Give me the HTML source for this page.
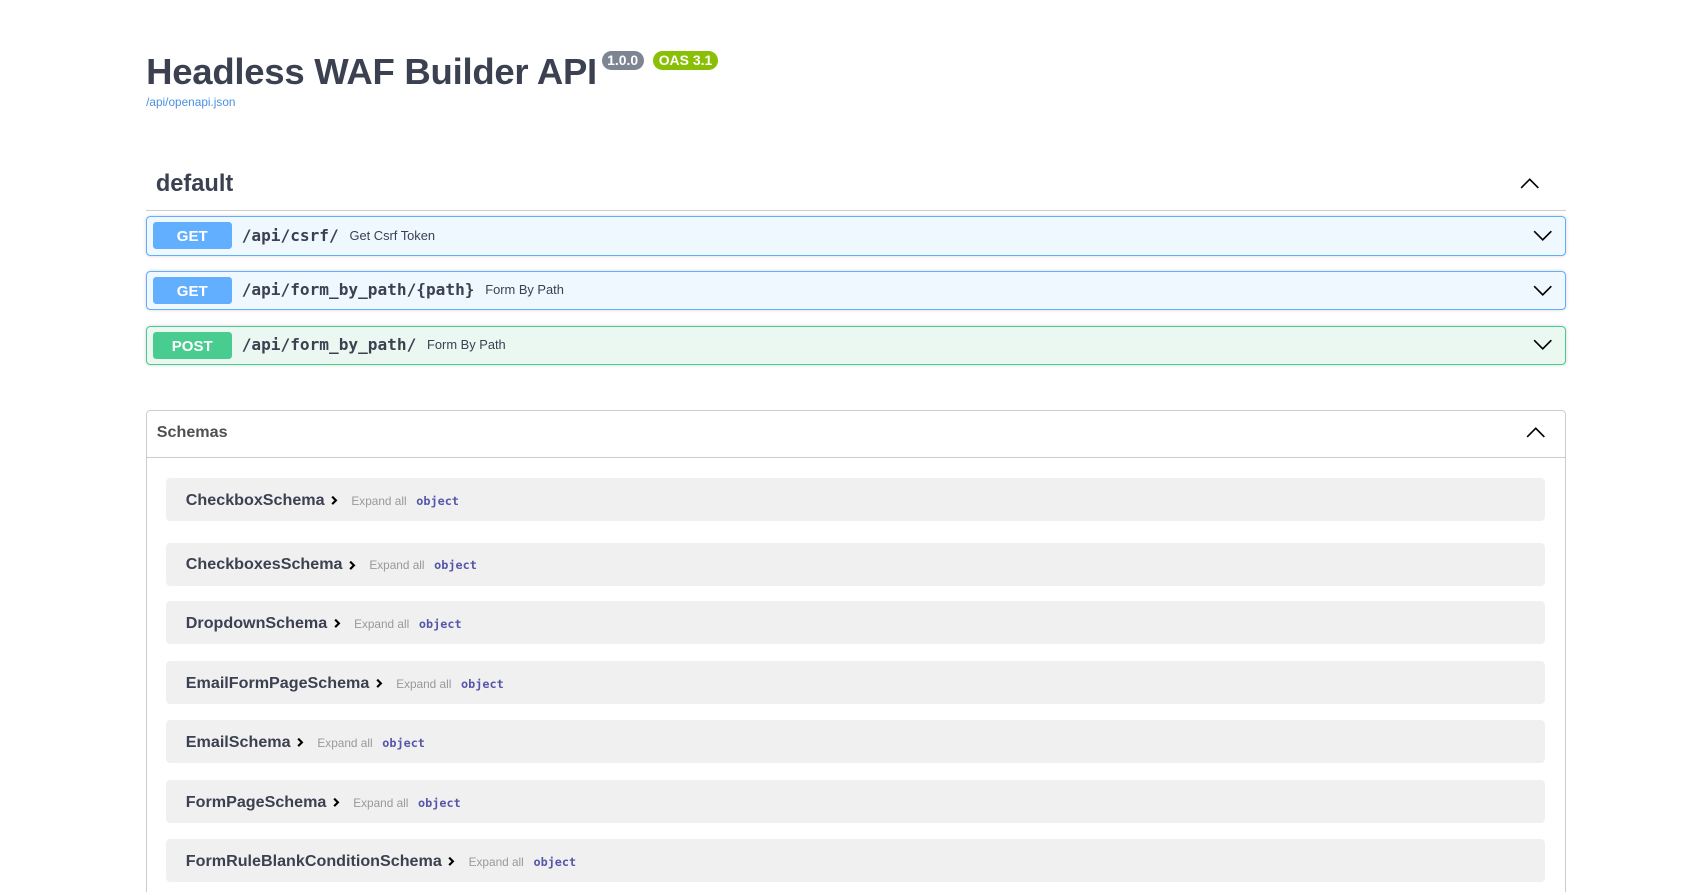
<!DOCTYPE html>
<html><head><meta charset="utf-8"><style>
html,body{margin:0;padding:0;background:#fff;overflow:hidden}
body{zoom:1.0746;width:1568px;height:830px;position:relative;font-family:"Liberation Sans",sans-serif;color:#3b4151}
.abs{position:absolute}
h1{position:absolute;left:136px;top:45px;margin:0;font-size:34px;font-weight:bold;color:#3b4151;line-height:44px;letter-spacing:-0.25px}
.badge{position:absolute;top:47px;height:18px;border-radius:57px;color:#fff;font-size:13px;font-weight:bold;line-height:18px;padding:0 5px}
.link{left:136px;top:88px;font-size:11px;color:#4990e2}
.tag{left:145px;top:159px;font-size:22px;font-weight:bold;color:#3b4151}
.hr{left:136px;width:1321px;height:1px;background:#ccc}
.op{position:absolute;left:136px;width:1319px;height:35px;border:1px solid;border-radius:4px;box-shadow:0 0 3px rgba(0,0,0,.19)}
.get{background:#eff7ff;border-color:#61affe}
.post{background:#ebf8f2;border-color:#49cc90}
.m{position:absolute;left:5px;top:5px;width:74px;height:25px;border-radius:3px;color:#fff;font-weight:bold;font-size:14px;text-align:center;line-height:27px}
.get .m{background:#61affe}.post .m{background:#49cc90}
.p{position:absolute;left:88px;top:8px;font-family:"DejaVu Sans Mono",monospace;font-weight:bold;font-size:15px;color:#3b4151}
.p span{font-family:"Liberation Sans",sans-serif;font-weight:normal;font-size:12px;margin-left:10px;position:relative;top:-1px}
.chev{position:absolute;right:10px;top:10px}
.sch{position:absolute;left:136px;top:382px;width:1319px;height:460px;border:1px solid #ccc;border-radius:4px}
.row{position:absolute;left:18px;width:1283px;height:40px;background:#f0f0f0;border-radius:4px}
.row .n{position:absolute;left:18px;top:12px;font-size:15px;font-weight:bold;color:#3b4151;white-space:nowrap}
.row .n svg{margin-left:5px;vertical-align:-1px}
.row .n em{font-style:normal;font-weight:normal;font-size:11px;color:#999;margin-left:12px}
.row .n b{font-family:"DejaVu Sans Mono",monospace;font-size:11px;color:#55a;margin-left:9px}
</style></head><body>
<h1>Headless WAF Builder API</h1>
<div class="badge" style="left:560px;background:#7d8492">1.0.0</div>
<div class="badge" style="left:608px;background:#89bf04">OAS 3.1</div>
<div class="abs link">/api/openapi.json</div>
<div class="abs tag">default</div>
<svg class="abs" style="left:1414px;top:163px" width="20" height="14" viewBox="0 0 20 14"><path d="M2 12 L10 4 L18 12" fill="none" stroke="#000" stroke-width="1.5"/></svg>
<div class="abs hr" style="top:195px"></div>
<div class="op get" style="top:201px"><div class="m">GET</div><div class="p">/api/csrf/<span>Get Csrf Token</span></div><svg class="chev" width="20" height="14" viewBox="0 0 20 14"><path d="M2 3 L10 11 L18 3" fill="none" stroke="#000" stroke-width="1.5"/></svg></div>
<div class="op get" style="top:252px"><div class="m">GET</div><div class="p">/api/form_by_path/{path}<span>Form By Path</span></div><svg class="chev" width="20" height="14" viewBox="0 0 20 14"><path d="M2 3 L10 11 L18 3" fill="none" stroke="#000" stroke-width="1.5"/></svg></div>
<div class="op post" style="top:303px"><div class="m">POST</div><div class="p">/api/form_by_path/<span>Form By Path</span></div><svg class="chev" width="20" height="14" viewBox="0 0 20 14"><path d="M2 3 L10 11 L18 3" fill="none" stroke="#000" stroke-width="1.5"/></svg></div>
<div class="sch">
<div class="abs" style="left:9px;top:11px;font-size:15px;font-weight:bold;color:#505050">Schemas</div>
<svg class="abs" style="left:1282px;top:12px" width="20" height="14" viewBox="0 0 20 14"><path d="M2 12 L10 4 L18 12" fill="none" stroke="#000" stroke-width="1.5"/></svg>
<div class="abs" style="left:0;top:42px;width:1319px;height:1px;background:#ccc"></div>
<div class="row" style="top:62px"><div class="n">CheckboxSchema<svg width="8" height="10" viewBox="0 0 8 10"><path d="M2 1.5 L5.5 5 L2 8.5" fill="none" stroke="#000" stroke-width="2"/></svg><em>Expand all</em><b>object</b></div></div>
<div class="row" style="top:122px"><div class="n">CheckboxesSchema<svg width="8" height="10" viewBox="0 0 8 10"><path d="M2 1.5 L5.5 5 L2 8.5" fill="none" stroke="#000" stroke-width="2"/></svg><em>Expand all</em><b>object</b></div></div>
<div class="row" style="top:176px"><div class="n">DropdownSchema<svg width="8" height="10" viewBox="0 0 8 10"><path d="M2 1.5 L5.5 5 L2 8.5" fill="none" stroke="#000" stroke-width="2"/></svg><em>Expand all</em><b>object</b></div></div>
<div class="row" style="top:232px"><div class="n">EmailFormPageSchema<svg width="8" height="10" viewBox="0 0 8 10"><path d="M2 1.5 L5.5 5 L2 8.5" fill="none" stroke="#000" stroke-width="2"/></svg><em>Expand all</em><b>object</b></div></div>
<div class="row" style="top:287px"><div class="n">EmailSchema<svg width="8" height="10" viewBox="0 0 8 10"><path d="M2 1.5 L5.5 5 L2 8.5" fill="none" stroke="#000" stroke-width="2"/></svg><em>Expand all</em><b>object</b></div></div>
<div class="row" style="top:343px"><div class="n">FormPageSchema<svg width="8" height="10" viewBox="0 0 8 10"><path d="M2 1.5 L5.5 5 L2 8.5" fill="none" stroke="#000" stroke-width="2"/></svg><em>Expand all</em><b>object</b></div></div>
<div class="row" style="top:398px"><div class="n">FormRuleBlankConditionSchema<svg width="8" height="10" viewBox="0 0 8 10"><path d="M2 1.5 L5.5 5 L2 8.5" fill="none" stroke="#000" stroke-width="2"/></svg><em>Expand all</em><b>object</b></div></div>
</div>
</body></html>
